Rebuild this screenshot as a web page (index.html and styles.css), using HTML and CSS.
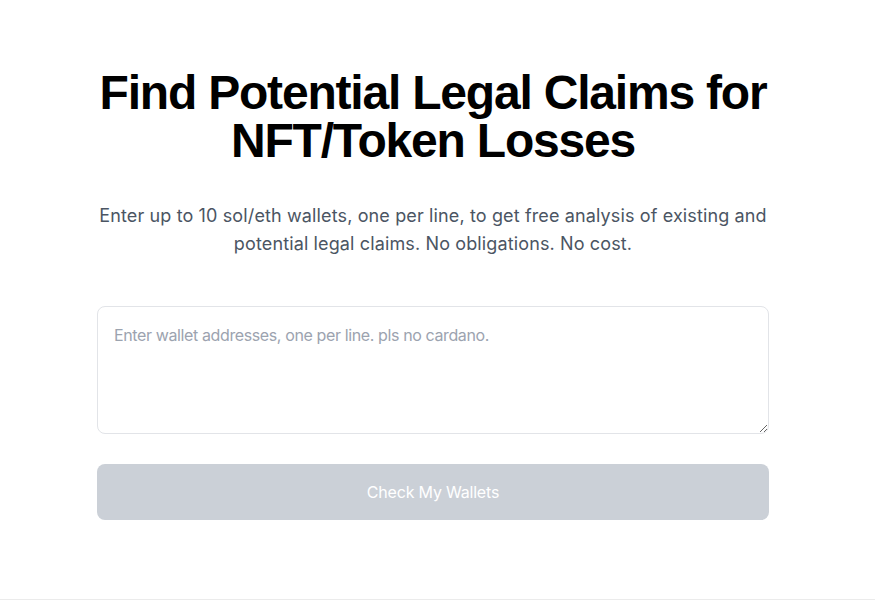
FILE: index.html
```html
<!DOCTYPE html>
<html lang="en">
<head>
<meta charset="utf-8">
<title>Find Potential Legal Claims</title>
<link rel="stylesheet" href="styles.css">
</head>
<body>
<div class="page">
  <main class="main">
    <div class="container">
      <h1 class="title">Find Potential Legal Claims for NFT/Token Losses</h1>
      <p class="subtitle">Enter up to 10 sol/eth wallets, one per line, to get free analysis of existing and potential legal claims. No obligations. No cost.</p>
      <form class="form">
        <textarea class="wallets" placeholder="Enter wallet addresses, one per line. pls no cardano."></textarea>
        <button type="button" class="submit" disabled>Check My Wallets</button>
      </form>
    </div>
  </main>
  <footer class="footer"></footer>
</div>
</body>
</html>
```
FILE: styles.css
```css
* { box-sizing: border-box; }
html, body { margin: 0; padding: 0; background: #ffffff; }
body {
  font-family: Inter, "Noto Sans", "Liberation Sans", sans-serif;
  color: #111827;
}
.page {
  min-height: 100vh;
  display: flex;
  flex-direction: column;
}
.main {
  height: 599px;
  display: flex;
  justify-content: center;
  padding: 69px 9px 0 0;
}
.container {
  width: 672px;
  display: flex;
  flex-direction: column;
  align-items: stretch;
}
.title {
  margin: 0;
  font-family: "Liberation Sans", Arial, sans-serif;
  font-size: 48px;
  line-height: 48px;
  font-weight: 700;
  letter-spacing: -1.2px;
  text-align: center;
  color: #000000;
}
.subtitle {
  margin: 37px 0 0;
  font-size: 18px;
  line-height: 28px;
  letter-spacing: 0.13px;
  color: #4b5563;
  text-align: center;
}
.form {
  margin-top: 48px;
  display: flex;
  flex-direction: column;
  gap: 30px;
}
.wallets {
  display: block;
  width: 100%;
  height: 128px;
  padding: 16px;
  border: 1px solid #e2e4e8;
  border-radius: 8px;
  font-family: Inter, "Noto Sans", "Liberation Sans", sans-serif;
  font-size: 16px;
  line-height: 24px;
  letter-spacing: -0.38px;
  color: #111827;
  resize: vertical;
  outline: none;
}
.wallets::placeholder { color: #9ca3af; }
.submit {
  height: 56px;
  width: 100%;
  border: none;
  border-radius: 8px;
  background: #cbd0d7;
  color: #ffffff;
  font-family: Inter, "Noto Sans", "Liberation Sans", sans-serif;
  font-size: 16px;
  font-weight: 400;
  letter-spacing: -0.2px;
}
.footer {
  border-top: 1px solid #ebebeb;
  height: 20px;
}
```
